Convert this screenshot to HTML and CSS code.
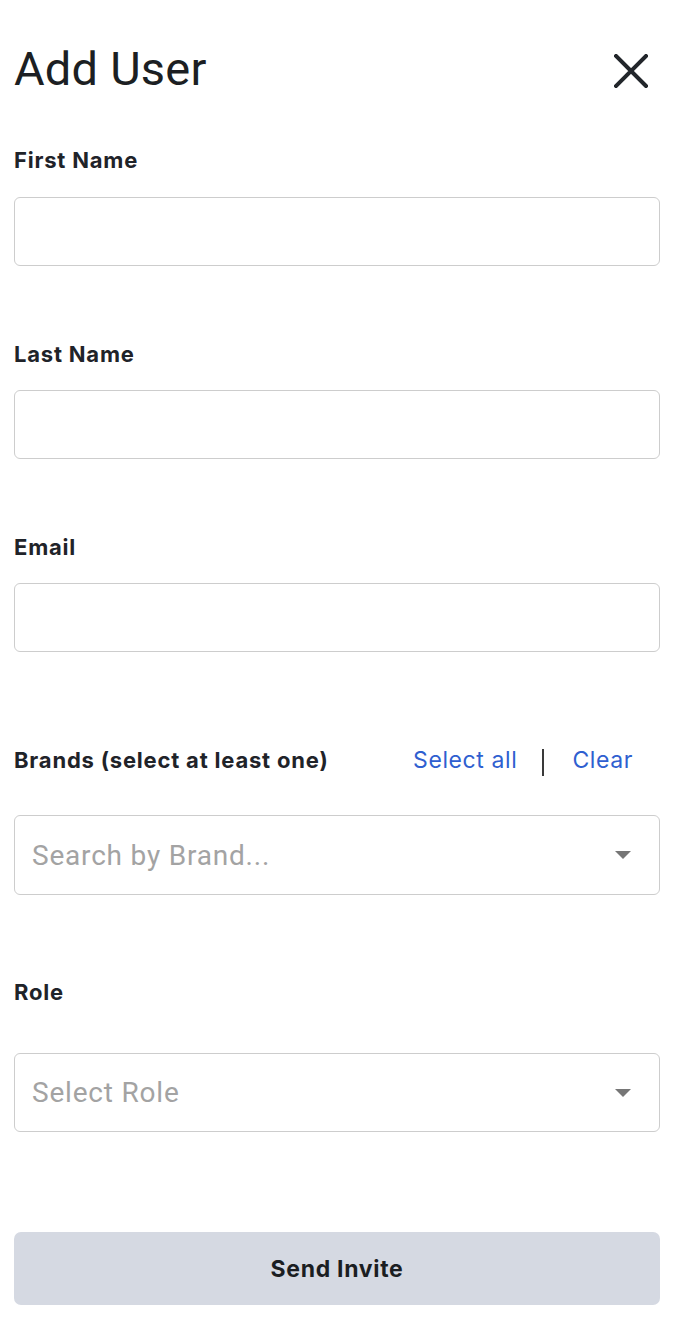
FILE: index.html
```html
<!DOCTYPE html>
<html lang="en">
<head>
<meta charset="utf-8">
<title>Add User</title>
<link rel="stylesheet" href="styles.css">
</head>
<body>
<div class="panel">
  <header class="header">
    <h1 class="title">Add User</h1>
    <button class="close" aria-label="Close">
      <svg width="34" height="34" viewBox="0 0 34 34"><path d="M2 2 L32 32 M32 2 L2 32" stroke="#22262b" stroke-width="4" stroke-linecap="square" fill="none"/></svg>
    </button>
  </header>

  <div class="field f-first">
    <label class="label">First Name</label>
    <div class="input"></div>
  </div>

  <div class="field f-last">
    <label class="label">Last Name</label>
    <div class="input"></div>
  </div>

  <div class="field f-email">
    <label class="label">Email</label>
    <div class="input"></div>
  </div>

  <div class="field f-brands">
    <div class="label-row">
      <label class="label">Brands (select at least one)</label>
      <div class="links">
        <a class="link">Select all</a>
        <span class="sep"></span>
        <a class="link">Clear</a>
      </div>
    </div>
    <div class="select select-brand">
      <span class="placeholder">Search by Brand...</span>
      <span class="caret"></span>
    </div>
  </div>

  <div class="field f-role">
    <label class="label">Role</label>
    <div class="select select-role">
      <span class="placeholder">Select Role</span>
      <span class="caret"></span>
    </div>
  </div>

  <button class="send">Send Invite</button>
</div>
</body>
</html>
```

FILE: styles.css
```css
* { box-sizing: border-box; }
html, body { margin: 0; padding: 0; background: #fff; }
body { font-family: Roboto, "Liberation Sans", sans-serif; color: #1f2328; }

.panel {
  padding: 41px 18px 0 14px;
  display: flex;
  flex-direction: column;
}

.header {
  display: flex;
  align-items: center;
  justify-content: space-between;
  height: 56px;
}
.title {
  margin: 0;
  font-family: Roboto, sans-serif;
  font-weight: 400;
  font-size: 47px;
  line-height: 56px;
  color: #1c1f23;
  letter-spacing: 0.2px;
}
.close {
  border: 0;
  background: none;
  padding: 0;
  width: 34px;
  height: 34px;
  margin-right: 12px;
  margin-top: 4px;
  display: block;
}
.close svg { display: block; }

.field { display: flex; flex-direction: column; }
.f-first { margin-top: 51px; }
.f-last { margin-top: 76px; }
.f-email { margin-top: 76px; }
.f-brands { margin-top: 96px; }
.f-role { margin-top: 85px; }

.label {
  font-family: Inter, "Liberation Sans", sans-serif;
  font-weight: 700;
  font-size: 22px;
  line-height: 24px;
  height: 24px;
  color: #1f2329;
  letter-spacing: 0.8px;
}

.input {
  margin-top: 25px;
  height: 69px;
  border: 1.5px solid #cdcdcd;
  border-radius: 6px;
}
.f-last .input, .f-email .input { margin-top: 24px; }

.label-row {
  display: flex;
  align-items: center;
  justify-content: space-between;
  height: 24px;
}
.links {
  display: flex;
  align-items: center;
  margin-right: 27px;
}
.link {
  font-family: Inter, "Liberation Sans", sans-serif;
  font-size: 23px;
  line-height: 24px;
  color: #2f5fd0;
  letter-spacing: 0.6px;
}
.sep {
  display: block;
  width: 2px;
  height: 27px;
  background: #3a3a3a;
  margin: 4px 28px 0 25px;
}

.select {
  display: flex;
  align-items: center;
  justify-content: space-between;
  border: 1.5px solid #cdcdcd;
  border-radius: 6px;
  padding: 0 28px 0 17px;
}
.select-brand { margin-top: 43px; height: 80px; }
.select-role { margin-top: 49px; height: 79px; }

.placeholder {
  font-family: Roboto, sans-serif;
  font-size: 28px;
  color: #a3a3a3;
  letter-spacing: 0.8px;
}
.caret {
  width: 0;
  height: 0;
  border-left: 8.5px solid transparent;
  border-right: 8.5px solid transparent;
  border-top: 8px solid #767676;
}

.send {
  margin-top: 100px;
  height: 73px;
  border: 0;
  border-radius: 7px;
  background: #d5d9e2;
  font-family: Inter, "Liberation Sans", sans-serif;
  font-weight: 700;
  font-size: 23px;
  color: #1b1e22;
  letter-spacing: 0.7px;
  padding: 0;
}
```
